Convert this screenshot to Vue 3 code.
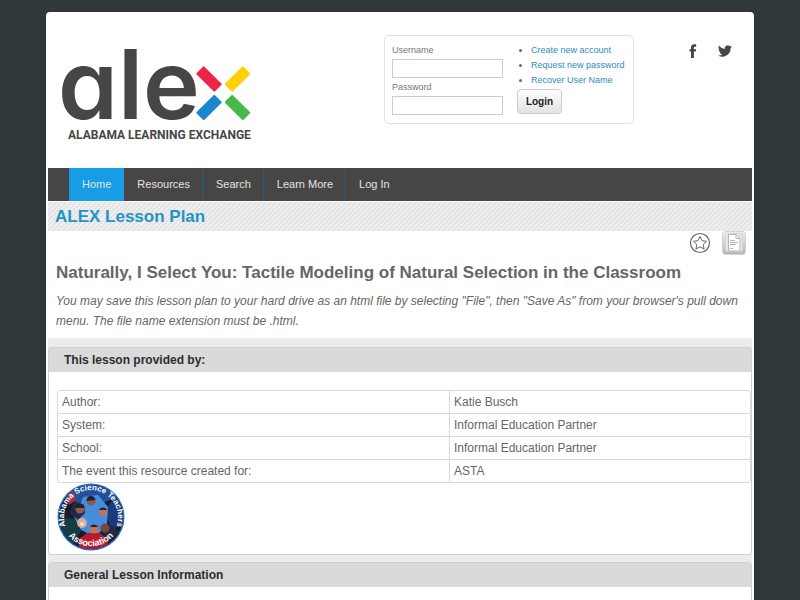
<template>
  <div class="page">
    <header class="header">
      <a class="logo" href="#" aria-label="ALEX Alabama Learning Exchange">
        <svg width="190" height="110" viewBox="0 0 190 110">
          <text class="logo__name" x="-4" y="84">ale</text>
          <g>
            <rect x="-13" y="-5.5" width="26" height="11" rx="1" fill="#ee2348" transform="translate(147 44) rotate(45)" />
            <rect x="-13" y="-5.5" width="26" height="11" rx="1" fill="#ffd004" transform="translate(175.500 44) rotate(-45)" />
            <rect x="-13" y="-5.5" width="26" height="11" rx="1" fill="#1c86cc" transform="translate(147 72.500) rotate(-45)" />
            <rect x="-13" y="-5.5" width="26" height="11" rx="1" fill="#49b749" transform="translate(175.500 72.500) rotate(45)" />
          </g>
          <text class="logo__tagline" x="6" y="104">ALABAMA LEARNING EXCHANGE</text>
        </svg>
      </a>

      <form class="login" @submit.prevent="handleLogin">
        <div class="login__fields">
          <label for="username">Username</label>
          <input id="username" type="text" v-model="username" />
          <label for="password">Password</label>
          <input id="password" type="password" v-model="password" />
        </div>
        <div class="login__side">
          <ul>
            <li v-for="link in accountLinks" :key="link"><a href="#">{{ link }}</a></li>
          </ul>
          <button type="submit">Login</button>
        </div>
      </form>

      <div class="social">
        <a href="#" aria-label="Facebook">
          <svg width="14" height="14" viewBox="0 0 14 14">
            <path fill="#484644" d="M5 14V7.600H3.500V5.200H5V3.600C5 1.300 6.200.2 8.300.2h1.900v2.500H9c-.9 0-1.100.4-1.100 1.100v1.400h2.300l-.3 2.400h-2V14z" />
          </svg>
        </a>
        <a href="#" aria-label="Twitter">
          <svg width="14" height="14" viewBox="0 0 24 24">
            <path fill="#484644" d="M24 4.600a10 10 0 0 1-2.800.8 5 5 0 0 0 2.100-2.700 10 10 0 0 1-3.100 1.200 4.900 4.900 0 0 0-8.400 4.500A14 14 0 0 1 1.700 3.100a4.900 4.900 0 0 0 1.500 6.600 5 5 0 0 1-2.200-.6 4.900 4.900 0 0 0 3.900 4.900 5 5 0 0 1-2.200.1 4.900 4.900 0 0 0 4.600 3.400A9.900 9.900 0 0 1 0 19.500a14 14 0 0 0 21.500-12.400A10 10 0 0 0 24 4.600z" />
          </svg>
        </a>
      </div>
    </header>

    <nav class="nav">
      <a
        v-for="item in navItems"
        :key="item"
        href="#"
        :class="{ active: item === current }"
        @click.prevent="current = item"
      >{{ item }}</a>
    </nav>

    <h1 class="strip">ALEX Lesson Plan</h1>

    <main>
      <div class="tools">
        <button type="button" aria-label="Add to favorites">
          <svg width="22" height="22" viewBox="0 0 22 22" fill="none" stroke="#666">
            <circle cx="11" cy="11" r="9.500" stroke-width="1.200" />
            <path stroke-linejoin="round" d="M11 4.500l2 4.200 4.500.6-3.300 3.200.9 4.600-4.100-2.300-4.100 2.300.9-4.600-3.300-3.200 4.500-.6z" />
          </svg>
        </button>
        <button type="button" aria-label="Print view">
          <svg width="24" height="24" viewBox="0 0 24 24" fill="none">
            <defs>
              <linearGradient id="tile" x1="0" y1="0" x2="0" y2="1">
                <stop offset="0" stop-color="#f0f0f0" />
                <stop offset="1" stop-color="#b4b4b4" />
              </linearGradient>
            </defs>
            <rect x=".5" y=".5" width="23" height="23" rx="3" fill="url(#tile)" stroke="#d2d2d2" />
            <rect x="3.500" y="2.500" width="17" height="18" rx="2" fill="#e6e6e6" stroke="#d6d6d6" />
            <path d="M6.500 3.500h7.500l4 4v12.500H6.500z" fill="#fff" stroke="#b5b5b5" />
            <path d="M14 3.500v4h4M8 9.500h5M8 11.500h8M8 13.500h6M8 17.500h3" stroke="#b5b5b5" />
          </svg>
        </button>
      </div>

      <h2 class="title">Naturally, I Select You: Tactile Modeling of Natural Selection in the Classroom</h2>
      <p class="hint">
        You may save this lesson plan to your hard drive as an html file by selecting "File", then "Save As" from your browser's pull down menu. The file name extension must be .html.
      </p>

      <div class="sections">
        <section class="panel">
          <h3>This lesson provided by:</h3>
          <div class="panel__body">
            <table>
              <tbody>
                <tr v-for="row in provider" :key="row.label">
                  <th scope="row">{{ row.label }}</th>
                  <td>{{ row.value }}</td>
                </tr>
              </tbody>
            </table>
            <svg class="badge" width="68" height="68" viewBox="0 0 68 68">
              <defs>
                <path id="arcTop" d="M12.500 50.500A27 27 0 1 1 55.500 50.500" />
                <path id="arcBottom" d="M6 44A30 30 0 0 0 62 44" />
                <clipPath id="disc"><circle cx="34" cy="34" r="32" /></clipPath>
              </defs>
              <circle cx="34" cy="34" r="33.500" fill="#2b6cc4" />
              <g clip-path="url(#disc)">
                <rect width="68" height="68" fill="#131c33" />
                <path d="M12 8L30 0h22l8 14-14 6-26 4z" fill="#234f9c" />
                <path d="M60 10l8 24-12 14-9-18z" fill="#1b3b7c" />
                <path d="M0 34l18 2 6 12-8 14L2 50z" fill="#173c43" />
                <path d="M26 14l15-2 10 12-1 18-12 12-14-7-7-13 6-11z" fill="#468de0" />
                <path d="M17 18l10 4 1 8-7 7-8-7z" fill="#202a40" />
                <path d="M22 56l8-6h13l9 8-6 10H22z" fill="#b71c2c" />
                <path d="M44 47l12-5 6 8-10 8z" fill="#252b40" />
                <path d="M10 12l6-4 3 9-7 5z" fill="#a82b48" />
                <circle cx="34" cy="18" r="4.500" fill="#8a5a4a" />
                <path d="M29.500 18a4.500 4.500 0 0 1 9-1z" fill="#26202a" />
                <circle cx="23" cy="26" r="4.500" fill="#925d4c" />
                <path d="M18.500 25a4.500 4.500 0 0 1 9 0z" fill="#26202a" />
                <circle cx="46" cy="29" r="4.500" fill="#ae7768" />
                <path d="M42 27a4.500 4.500 0 0 1 8 0z" fill="#2d2026" />
                <circle cx="25" cy="40" r="5" fill="#dfaa98" />
                <circle cx="25" cy="41" r="2" fill="#f7ddd3" />
                <circle cx="48" cy="45" r="4.500" fill="#76483e" />
                <circle cx="37" cy="46" r="4.500" fill="#bd765d" />
                <path d="M33 44a4.500 4.500 0 0 1 8 0z" fill="#2d2026" />
              </g>
              <text><textPath href="#arcTop" startOffset="50%">Alabama Science Teachers</textPath></text>
              <text class="badge__base"><textPath href="#arcBottom" startOffset="50%">Association</textPath></text>
            </svg>
          </div>
        </section>

        <section class="panel">
          <h3>General Lesson Information</h3>
          <div class="panel__body"></div>
        </section>
      </div>
    </main>
  </div>
</template>

<script setup>
import { ref } from 'vue';

const username = ref('');
const password = ref('');
const current = ref('Home');

const navItems = ['Home', 'Resources', 'Search', 'Learn More', 'Log In'];
const accountLinks = ['Create new account', 'Request new password', 'Recover User Name'];

const provider = [
  { label: 'Author:', value: 'Katie Busch' },
  { label: 'System:', value: 'Informal Education Partner' },
  { label: 'School:', value: 'Informal Education Partner' },
  { label: 'The event this resource created for:', value: 'ASTA' }
];

const handleLogin = () => {
  password.value = '';
};
</script>

<style>
body {
  background: linear-gradient(135deg, #2f3639 25%, #32393c 25% 50%, #2f3639 50% 75%, #32393c 75%) 0 0 / 4px 4px;
  overflow: hidden;
}
</style>

<style scoped>
.page {
  box-sizing: border-box;
  margin: 12px 46px 0;
  padding: 0 2px;
  background: #fff;
  border-radius: 4px 4px 0 0;
  font-family: "Liberation Sans", Arial, sans-serif;
  font-size: 12px;
  color: #666;
}

.header {
  display: flex;
  align-items: flex-start;
  height: 156px;
}

.logo {
  margin: 23px 0 0 14px;
}

.logo svg {
  display: block;
  overflow: visible;
}

.logo__name {
  font-family: Inter, Lato, sans-serif;
  font-feature-settings: "cv11";
  font-size: 96px;
  font-weight: 600;
  fill: #484644;
}

.logo__tagline {
  font-family: Roboto, sans-serif;
  font-size: 12px;
  font-weight: 700;
  fill: #484644;
}

.login {
  display: flex;
  box-sizing: border-box;
  width: 250px;
  height: 89px;
  margin: 23px 0 0 132px;
  padding: 7px;
  border: 1px solid #e2e2e2;
  border-radius: 5px;
  font-size: 9px;
}

.login__fields {
  width: 111px;
}

.login label {
  display: block;
  line-height: 15px;
  color: #777;
}

.login input {
  display: block;
  box-sizing: border-box;
  width: 111px;
  height: 19px;
  margin: 1px 0 2px;
  border: 1px solid #ccc;
  background: #fff;
}

.login__side {
  margin-left: 14px;
}

.login ul {
  margin: 0 0 1px;
  padding: 0 0 0 14px;
  line-height: 15px;
}

.login li {
  white-space: nowrap;
}

.login li a {
  color: #2a8cc4;
  text-decoration: none;
}

.login button {
  display: block;
  width: 45px;
  height: 25px;
  padding: 0;
  border: 1px solid #ccc;
  border-radius: 4px;
  background: linear-gradient(#fff, #e2e2e2);
  font-family: inherit;
  font-size: 10px;
  font-weight: 700;
  color: #222;
}

.social {
  display: flex;
  gap: 18px;
  margin: 32px 20px 0 auto;
}

.social svg {
  display: block;
}

.nav {
  display: flex;
  height: 33px;
  padding-left: 21px;
  background: #484644;
}

.nav a {
  padding: 0 12px 0 13px;
  border-right: 1px solid #1f5f8a;
  font-size: 11px;
  line-height: 33px;
  color: #e4e4e4;
  text-decoration: none;
}

.nav a:last-child {
  border-right: 0;
}

.nav a.active {
  border-right-color: #179de6;
  background: #179de6;
}

.strip {
  margin: 1px 0 0;
  padding-left: 7px;
  background: linear-gradient(135deg, #eee 25%, #e2e2e2 25% 50%, #eee 50% 75%, #e2e2e2 75%) 0 0 / 5px 5px;
  font-size: 17px;
  line-height: 29px;
  color: #2494c5;
}

.tools {
  display: flex;
  justify-content: flex-end;
  align-items: center;
  gap: 11px;
  height: 24px;
  padding-right: 6px;
}

.tools button {
  padding: 0;
  border: 0;
  background: none;
}

.tools svg {
  display: block;
}

.title {
  margin: 6px 8px 0;
  font-size: 17px;
  line-height: 24px;
  color: #666;
}

.hint {
  margin: 6px 8px 7px;
  font-size: 12px;
  font-style: italic;
  line-height: 20px;
}

.sections {
  display: flex;
  flex-direction: column;
  gap: 7px;
  padding-top: 9px;
  background: #ececec;
}

.panel {
  border: 1px solid #d0d0d0;
  border-radius: 3px;
  background: #fff;
}

.panel h3 {
  margin: 0;
  padding-left: 15px;
  background: #dadada;
  font-size: 12px;
  line-height: 24px;
  color: #2b2e30;
}

.panel__body {
  min-height: 14px;
  padding: 18px 0 3px 8px;
}

table {
  width: 100%;
  border: 1px solid #d8d8d8;
  border-radius: 3px;
  border-spacing: 0;
  table-layout: fixed;
}

th,
td {
  height: 22px;
  padding: 0 4px;
  border-top: 1px solid #d8d8d8;
  font-weight: 400;
  text-align: left;
}

th {
  width: 383px;
}

td {
  border-left: 1px solid #d8d8d8;
}

tr:first-child > * {
  border-top: 0;
}

.badge {
  display: block;
}

.badge text {
  font-size: 8px;
  font-weight: 700;
  text-anchor: middle;
  fill: #fff;
}

.badge .badge__base {
  font-size: 9px;
}
</style>
